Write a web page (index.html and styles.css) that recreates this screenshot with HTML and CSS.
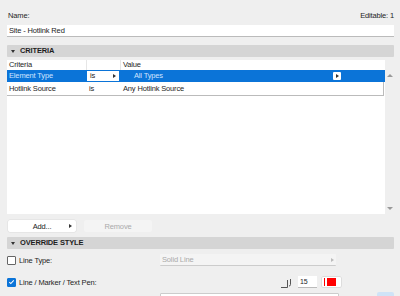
FILE: index.html
```html
<!DOCTYPE html>
<html lang="en">
<head>
    <meta charset="UTF-8">
    <title>Graphic Override Rule</title>
    <link rel="stylesheet" href="styles.css">
</head>
<body>
    <div class="panel">
        <div class="name-row">
            <span>Name:</span>
            <span>Editable: 1</span>
        </div>
        <div class="text-field">Site - Hotlink Red</div>

        <div class="section-header"><span class="caret"></span>CRITERIA</div>

        <div class="criteria">
            <div class="table">
                <div class="row head">
                    <div class="cell c1">Criteria</div>
                    <div class="cell c2"></div>
                    <div class="cell c3">Value</div>
                </div>
                <div class="row selected">
                    <div class="cell c1">Element Type</div>
                    <div class="cell c2"><div class="mini-select">is<span class="arrow"></span></div></div>
                    <div class="cell c3 value-pick">
                        <span class="indent">All Types</span>
                        <span class="pick-btn"><span class="arrow"></span></span>
                    </div>
                </div>
                <div class="row boxed">
                    <div class="cell c1">Hotlink Source</div>
                    <div class="cell c2">is</div>
                    <div class="cell c3">Any Hotlink Source</div>
                </div>
            </div>
            <div class="scrollbar">
                <span class="up"></span>
                <span class="down"></span>
            </div>
        </div>

        <div class="buttons">
            <button class="btn">Add...<span class="arrow"></span></button>
            <button class="btn disabled">Remove</button>
        </div>

        <div class="section-header override"><span class="caret"></span>OVERRIDE STYLE</div>

        <div class="option">
            <label class="check"><span class="box"></span>Line Type:</label>
            <div class="dropdown">Solid Line<span class="arrow"></span></div>
        </div>

        <div class="option pen-row">
            <label class="check"><span class="box on">
                <svg width="8" height="8" viewBox="0 0 8 8"><path d="M1.5 4.2 L3.2 5.8 L6.6 2.2" fill="none" stroke="#fff" stroke-width="1.2"/></svg>
            </span>Line / Marker / Text Pen:</label>
            <div class="pen">
                <svg class="ruler" width="11" height="11" viewBox="0 0 11 11">
                    <path d="M0 10.5 H6.5 M6.5 10.5 V3 M9.5 2 V7.5 Q9.5 9 8 9" fill="none" stroke="#555" stroke-width="1"/>
                </svg>
                <div class="pen-field">15</div>
                <div class="swatch"><span class="bar"></span><span class="sq"></span></div>
            </div>
        </div>

        <div class="option last">
            <div class="spacer"></div>
            <div class="dropdown blank"></div>
            <div class="blue-btn"></div>
        </div>
    </div>
</body>
</html>
```

FILE: styles.css
```css
body {
    margin: 0;
    background-color: #efefef;
    font-family: "Liberation Sans", Arial, sans-serif;
    font-size: 7.5px;
    letter-spacing: -0.15px;
    color: #1e1e1e;
    overflow: hidden;
}

.panel {
    padding: 11px 6px 0 7px;
}

.name-row {
    display: flex;
    justify-content: space-between;
    height: 10px;
    line-height: 10px;
    padding-left: 1px;
}

.text-field {
    margin-top: 4px;
    height: 11px;
    line-height: 11px;
    background-color: #fff;
    border-bottom: 1px solid #bbb;
    padding-left: 2px;
}

.section-header {
    margin-top: 8px;
    height: 12px;
    line-height: 12px;
    background-color: #d5d5d5;
    font-weight: bold;
    display: flex;
    align-items: center;
    border-radius: 1px;
}

.section-header.override {
    margin-top: 5px;
}

.caret {
    width: 0;
    height: 0;
    border-left: 2.5px solid transparent;
    border-right: 2.5px solid transparent;
    border-top: 3px solid #333;
    margin: 0 5px 0 4px;
}

.criteria {
    display: flex;
    margin-top: 3px;
}

.table {
    flex: 1;
    height: 154px;
    background-color: #fff;
}

.row {
    display: flex;
    height: 11px;
    line-height: 11px;
}

.row.head {
    height: 10px;
    line-height: 10px;
}

.cell {
    padding-left: 2px;
    white-space: nowrap;
}

.c1 {
    width: 77px;
}

.c2 {
    width: 31px;
    border-left: 1px solid #e6e6e6;
    border-right: 1px solid #e6e6e6;
}

.c3 {
    flex: 1;
}

.row.selected {
    height: 12px;
    line-height: 12px;
    background-color: #0b74d8;
    color: #cfe4ff;
}

.row.selected .c2 {
    border: none;
    padding: 1px 0 0 1px;
    width: 32px;
}

.mini-select {
    background-color: #fff;
    color: #222;
    height: 10px;
    line-height: 10px;
    padding-left: 3px;
    display: flex;
    justify-content: space-between;
    align-items: center;
}

.arrow {
    width: 0;
    height: 0;
    border-top: 2px solid transparent;
    border-bottom: 2px solid transparent;
    border-left: 3px solid #333;
    margin-right: 3px;
}

.value-pick {
    display: flex;
    align-items: center;
    justify-content: space-between;
}

.indent {
    padding-left: 13px;
}

.pick-btn {
    width: 8px;
    height: 8px;
    background-color: #fff;
    display: flex;
    align-items: center;
    justify-content: center;
    margin-right: 44px;
    border-radius: 1px;
}

.pick-btn .arrow {
    margin: 0;
}

.row.boxed {
    height: 13px;
    line-height: 13px;
    border: 1px solid #bbb;
    border-top: none;
    border-left: none;
    margin-right: 1px;
}

.row.boxed .c2 {
    border-color: transparent;
}

.scrollbar {
    width: 9px;
    display: flex;
    flex-direction: column;
    justify-content: space-between;
    align-items: center;
    padding: 14px 0 4px;
}

.up, .down {
    width: 0;
    height: 0;
    border-left: 3px solid transparent;
    border-right: 3px solid transparent;
}

.up {
    border-bottom: 3px solid #999;
}

.down {
    border-top: 3px solid #999;
}

.buttons {
    display: flex;
    gap: 8px;
    margin-top: 6px;
    padding-left: 1px;
}

.btn {
    width: 68px;
    height: 12px;
    font-family: inherit;
    font-size: 7.5px;
    letter-spacing: -0.15px;
    color: #222;
    background-color: #fff;
    border: none;
    border-radius: 2px;
    box-shadow: 0 0 0 0.5px #ddd;
    position: relative;
    padding: 0;
}

.btn .arrow {
    position: absolute;
    right: 1px;
    top: 4px;
}

.btn.disabled {
    background-color: #f4f4f4;
    color: #aaa;
    box-shadow: none;
}

.section-header + .option {
    margin-top: 5px;
}

.option {
    display: flex;
    align-items: center;
    height: 12px;
    margin-top: 8px;
}

.option.pen-row {
    margin-top: 10px;
}

.check {
    display: flex;
    align-items: center;
    width: 153px;
}

.box {
    width: 7px;
    height: 7px;
    border: 1px solid #666;
    border-radius: 1px;
    background-color: #fff;
    margin-right: 3px;
    display: flex;
    align-items: center;
    justify-content: center;
}

.box.on {
    background-color: #0b74d8;
    border-color: #0b74d8;
}

.dropdown {
    width: 172px;
    height: 11px;
    line-height: 11px;
    background-color: #f4f4f4;
    border-bottom: 1px solid #ccc;
    color: #aaa;
    padding-left: 2px;
    padding-right: 2px;
    display: flex;
    justify-content: space-between;
    align-items: center;
    border-radius: 1px;
}

.dropdown .arrow {
    border-left-color: #bbb;
    margin-right: 0;
}

.pen {
    display: flex;
    align-items: center;
    margin-left: 121px;
    gap: 5px;
}

.ruler {
    margin-top: 1px;
}

.pen-field {
    width: 17px;
    height: 11px;
    line-height: 11px;
    background-color: #fff;
    border-bottom: 1px solid #bbb;
    padding-left: 2px;
    font-size: 7px;
    margin-left: 1px;
}

.swatch {
    width: 17px;
    height: 10px;
    background-color: #fff;
    border-radius: 1px;
    box-shadow: 0 0 0 0.5px #ccc;
    display: flex;
    align-items: center;
    gap: 2px;
    padding-left: 2px;
}

.bar {
    width: 1px;
    height: 8px;
    background-color: #f00;
}

.sq {
    width: 9px;
    height: 8px;
    background-color: #f00;
}

.option.last {
    margin-top: 1px;
    align-items: flex-start;
}

.spacer {
    width: 153px;
}

.dropdown.blank {
    background-color: #fff;
    border: 1px solid #ccc;
    height: 12px;
    margin-top: 4px;
    width: 174px;
}

.blue-btn {
    width: 17px;
    height: 12px;
    background-color: #cfe3f7;
    border-radius: 2px;
    margin-left: 38px;
    margin-top: 3px;
}
```
